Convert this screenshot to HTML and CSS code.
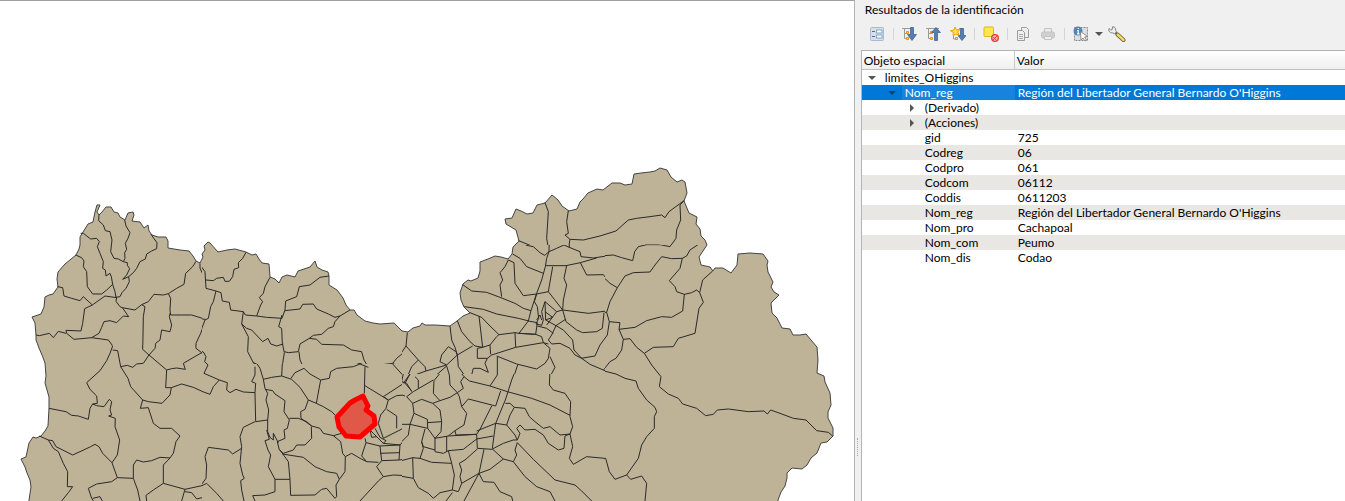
FILE: index.html
```html
<!DOCTYPE html>
<html lang="es">
<head>
<meta charset="utf-8">
<title>Resultados de la identificación</title>
<link rel="stylesheet" href="styles.css">
</head>
<body>
<div class="window">
<main class="canvas">
<svg class="map" viewBox="0 1 854 500" preserveAspectRatio="xMinYMin slice" role="img" aria-label="Mapa de distritos">
<defs>
<clipPath id="nw"><rect x="0" y="0" width="202" height="345"/></clipPath>
<clipPath id="sw"><rect x="0" y="345" width="202" height="160"/></clipPath>
<clipPath id="nc"><rect x="202" y="0" width="200" height="364"/></clipPath>
<clipPath id="sc"><rect x="202" y="364" width="200" height="140"/></clipPath>
<clipPath id="ne"><rect x="402" y="245" width="203" height="129"/></clipPath>
<clipPath id="se"><rect x="402" y="374" width="203" height="130"/></clipPath>
<clipPath id="top"><rect x="402" y="0" width="452" height="245"/></clipPath>
<clipPath id="east"><rect x="605" y="245" width="249" height="260"/></clipPath>
</defs>
<path class="region" d="M29 505L29 500 31 487 30 480 27 473 25 467 21 459 26 457 29 443 33 437 36 438 41 436 45 431 48 426 49 408 49 397 47 390 45 383 46 376 45 363 42 355 39 348 36 340 36 335 35 323 32 317 41 314 44 307 45 297 49 295 53 294 58 287 57 279 58 272 65 264 76 255 79 249 80 245 80 237 83 232 88 224 93 222 95 212 97 205 100 205 97 212 99 215 102 212 106 207 111 207 114 212 118 213 120 217 125 220 128 213 133 212 134 215 132 221 140 222 144 228 148 225 149 231 152 235 158 237 166 237 168 241 168 248 180 250 189 251 193 256 196 261 200 263 203 257 202 254 205 250 204 246 208 242 210 243 218 252 227 250 235 249 246 252 252 255 256 254 259 259 262 263 269 264 270 277 275 279 279 283 282 277 287 275 295 277 298 271 304 269 310 267 315 261 317 267 322 270 328 272 329 276 329 285 337 290 343 298 346 305 350 310 354 310 357 315 365 321 373 323 380 324 394 323 402 331 408 332 413 328 420 326 422 323 425 325 435 325 450 326 457 321 463 316 470 313 464 307 461 300 460 293 463 284 468 280 471 281 478 278 480 271 480 262 488 259 495 256 501 257 508 259 512 254 513 247 519 241 516 230 506 224 505 219 512 218 516 209 521 211 527 214 533 213 537 205 545 203 552 195 558 200 562 206 569 211 577 209 580 202 583 199 588 193 597 189 603 190 612 183 620 183 625 185 632 184 634 174 641 173 650 172 655 171 660 168 667 170 671 177 677 182 682 180 685 182 687 193 684 201 689 213 697 217 696 224 700 229 701 236 705 240 707 245 699 257 701 265 710 267 713 271 715 268 723 268 731 273 737 265 738 254 750 253 763 254 768 261 767 265 768 272 773 282 771 287 774 292 779 295 771 303 772 313 777 318 782 328 790 329 793 335 800 335 806 334 811 340 817 347 818 360 817 373 824 376 825 382 830 393 831 405 828 412 828 418 833 428 833 436 827 442 821 443 819 448 817 453 811 458 807 465 802 469 792 468 787 473 787 478 785 486 781 492 778 500 778 505Z"/>

<g clip-path="url(#nw)"><g class="limits" transform="translate(0 190) scale(.33333)">
<path d="M297 74L296 92 310 105 316 122 330 125 336 150 332 185 342 205 355 207 370 215 382 218 382 226 389 236 380 255 368 268 386 260 388 275 378 295 366 308 360 320 348 322 345 305 338 283 334 260 330 250 318 258 316 240 308 235 310 215 300 190 292 170 298 155 290 145 272 147 250 130 242 130"/>
<path d="M374 90L378 108 390 128 384 145 376 160 380 178 374 188 375 205 370 215"/>
<path d="M453 133L462 146 471 158 470 176 455 183 440 192 436 207 420 215 410 235 400 248 386 260"/>
<path d="M227 195L245 203 252 213 250 230 260 245 262 290 278 312 305 312 320 300 338 283"/>
<path d="M173 290L188 293 192 318 215 325 240 332 250 320 277 345 315 318 350 323 348 334 360 350 367 353 386 380 370 378 350 398 330 392 312 395 305 412 297 430 275 443 325 450 340 470 336 480"/>
<path d="M277 345L254 356 248 400 243 423 198 421 200 430 222 448 255 445 275 443M198 430L175 424 160 443 148 430 118 437 108 435"/>
<path d="M367 353L405 360 425 344 445 335 462 313 490 315 505 311 530 295 552 283 557 250 578 230 588 214M425 344L435 350 430 380 428 490"/>
<path d="M505 311L512 325 510 360 512 375 545 375 575 375 617 388 628 355 638 330 648 307 620 297 615 268 600 234 600 220"/>
<path d="M510 370L508 380 515 405 510 425 485 420 480 450 467 460 462 480M617 388L602 430 588 460 590 482"/>
</g></g>

<g clip-path="url(#sw)"><g class="limits" transform="translate(0 340) scale(.33333)">
<path d="M320 0L338 18 330 40 320 62 300 92 260 128 270 148 290 168 292 190 278 192 270 205 265 238 235 228 215 226 198 215 147 205M278 192L290 197 312 200 328 178 335 185 330 210 335 225 326 228 346 235 345 260 359 300 352 345 336 368"/>
<path d="M338 30L353 32 362 80 382 76 398 82 410 72 430 70 447 45 465 25 470 0M428 0L428 28 447 45 500 90 515 86 530 84 556 88 550 70 605 38"/>
<path d="M362 80L384 115 392 140 428 180 445 185 486 190 510 165 514 143 497 143 500 90M514 143L545 132 580 142 628 164 640 140 658 118 613 98 624 70 605 38 588 25 587 0"/>
<path d="M428 180L421 205 445 203 460 250 480 265 515 265 540 288 528 305 520 340 510 354 480 352 455 362 430 366 410 360 400 375 400 415 352 413 336 368"/>
<path d="M118 288L145 300 158 302 168 320 218 345 240 335 272 320 285 313 297 320 308 340 336 368M145 300L160 325 175 335 190 370 203 395 202 440 218 440 205 458 185 483"/>
<path d="M352 413L335 425 290 432 265 445 275 475 280 483M278 475L300 470 307 483M400 415L413 450 420 483M510 354L490 375 490 430 460 450 438 466 440 483M490 430L555 448 610 436 618 410 612 370 625 322 660 325M610 436L630 460 650 483M555 448L545 483M555 455L575 458 590 477 605 473 612 483"/>
</g></g>

<g clip-path="url(#nc)"><g class="limits" transform="translate(200 220) scale(.33333)">
<path d="M138 97L128 115 115 128 116 143 102 148 98 170 88 184 75 184 70 172 50 175 40 182 18 180M0 134L15 155 18 205 48 213 63 218 67 243 88 247 92 270 130 275 136 285 170 288 182 255 188 245 178 233 190 220 195 200 210 172"/>
<path d="M48 213L40 245 32 260 25 295 15 300 0 340M0 296L16 298M130 275L125 312 145 350 143 395 160 428 170 432 165 460 155 480M125 312L140 325 155 330 188 365 204 355 212 372 230 378 250 372"/>
<path d="M170 288L200 292 246 295 255 270 257 243 290 230 298 200 330 195 360 172 387 168M255 272L300 267 308 253 340 252 350 267 385 282 405 292 420 288 450 270M246 285L236 320 245 325 247 370 253 398 248 430 247 468M253 395L265 398 295 395 300 372 328 355 340 346 365 343 385 325 400 320 405 305 420 288"/>
<path d="M328 355L350 358 365 373 430 375 455 390 485 395 492 420 505 442 540 435 578 430 605 445 612 480M505 440L495 450 492 480M505 442L480 430 440 443 400 445 388 475 365 478 330 460 312 445 300 420 297 395M312 445L285 458 273 475 247 468 215 475 190 480 180 450 160 428"/>
<path d="M625 336L622 355 613 378 608 400 590 415 578 430M613 378L635 395 655 418M0 392L10 396 18 410 14 425 24 435 12 460 40 468 60 482"/>
</g></g>

<g clip-path="url(#sc)"><g class="limits" transform="translate(200 350) scale(.33333)">
<path d="M0 2L10 6 18 20 14 35 24 45 12 70 58 90 82 98 80 120 90 128 108 118 130 126 165 128 167 100 155 95 165 75 165 50M0 122L30 133 40 110 58 90M165 128L167 215 203 210 206 180 198 150 203 130 195 115 190 88 180 55 170 40"/>
<path d="M190 88L215 82 245 78 275 88 300 112 325 150 349 160 362 90M247 40L245 78M273 85L285 68 312 55 330 72 362 90 388 85 392 65 410 55 460 50 480 42 505 52M325 150L315 178 302 185 303 205 335 228 360 235 370 250 400 257 425 250"/>
<path d="M195 118L218 122 225 132 255 152 252 185 268 210 262 235 252 240 255 265 232 275 238 300 250 310 280 300 290 285 315 285 335 265 334 230M268 205L295 205 320 215 335 228M349 160L370 170 395 185 410 200"/>
<path d="M203 210L203 245 210 262 220 270 220 250 235 278M200 240L208 268 195 272 204 300 212 315 205 350 225 388 225 425 195 435 158 437 165 453M225 388L270 388 265 335 240 300"/>
<path d="M247 312L310 322 345 350 380 365 410 370 418 388 435 365 436 320 428 310 422 275 400 257"/>
<path d="M270 388L272 436 345 435 365 418 380 415 405 445 410 440 408 405 418 388M436 320L455 310 480 325 500 335 535 337"/>
<path d="M165 215L130 232 120 260 125 290 120 340 128 375 133 385 122 392 125 420 132 453M125 295L98 312 85 300 25 292 15 320 20 345 18 385 0 410 20 400 50 430 70 453"/>
<path d="M495 50L493 130M493 106L565 150 550 140 608 102 608 75 578 42M608 98L620 115 630 120 660 110M550 140M565 150L590 137 610 135 630 120M565 150L558 175 542 195 535 220 550 265 600 240 630 222 660 225M560 178L590 198 590 235M610 135L640 160 638 205 630 222"/>
<path d="M525 235L540 262 558 272 550 280 520 250 510 240M510 240L515 262 530 260 550 280 600 285 630 250 630 222M495 265L498 278 540 288 600 285 597 330 545 332 540 288M540 310L597 308M498 278L485 318 500 335M545 332L530 350 550 380 580 375 638 378 637 325 597 330M637 325L660 323M550 380L535 393 480 453"/>
</g></g>

<g clip-path="url(#ne)"><g class="limits" transform="translate(400 240) scale(.33333)">
<path d="M188 134L215 153 260 157 300 172 345 190 370 205 393 212M193 200L250 208 290 222 355 235 387 243M325 60L315 80 300 98 308 120 300 135 305 170M325 60L342 68 345 130 370 167 410 162 445 155"/>
<path d="M338 42L360 55 380 80 430 100M357 3L380 16 400 20 420 38 434 46 447 35 448 0M447 35L440 55 436 80 425 120 410 160 393 212 385 243 357 280M447 35L470 25 492 15 510 23 540 35 543 50 580 54 640 45 660 51M508 0L508 23M436 77L498 77 541 68 590 54M458 80L445 155 463 178 488 210M500 77L492 115 500 135 490 180 488 210M541 68L560 105 610 104 630 130 655 142M655 142L640 160 635 185 622 213M488 210L565 220 620 213 628 240 622 285 600 315 585 348 543 355"/>
<path d="M488 210L498 245 530 270 548 278 590 275 607 265 612 218M498 237L468 257 455 285 445 300 455 312 480 310 510 325 525 345 545 355 570 373 610 390 660 410M468 257L490 270 518 300 522 330 545 355M610 390L635 365 660 335M628 247L660 247"/>
<path d="M410 162L403 185 412 200 416 235 408 252 425 256 430 240 425 215 435 185 470 215 488 210M435 185L437 240 458 232 435 215M437 240L468 257M410 240L420 225 425 240M385 243L412 248 407 283 357 280M412 258L440 265 460 280M440 255L470 215"/>
<path d="M172 242L185 275 210 305 225 318 248 322 270 315 290 290 297 284 270 258 245 232 210 218M237 228L248 322M297 284L345 278 357 280M345 278L347 322 430 308 445 312M357 280L407 283 425 290 430 308M150 258L155 300 165 322 172 345 175 380 200 415 213 412 220 385 240 385 265 397 255 370 262 355 232 355 232 325 248 322M218 318L172 345M262 355L275 345 347 322M270 315L272 343"/>
<path d="M290 348L350 372 410 387 435 370 445 355 450 325 430 308M292 350L292 405 270 438M353 375L328 450M450 350L465 382 450 410 450 440 460 450"/>
<path d="M22 278L18 318 0 345M18 318L55 360 75 380 78 393 140 375 130 370 120 365 125 345 145 320 168 335 172 345 140 375M55 360L35 380 20 415 18 430 0 405M78 393L30 410 18 430M45 410L58 442 98 415 140 378 148 405 150 450M102 415L98 450M200 415L182 435 180 450M200 420L300 447"/>
</g></g>

<g clip-path="url(#se)"><g class="limits" transform="translate(400 360) scale(.33333)">
<path d="M140 15L102 62 100 100 120 122 98 130 65 118 38 130 20 110 40 95 100 60M140 15L148 45 150 75 172 98 190 85 182 65 192 50 172 25 170 0M172 98L150 112 120 122M30 42L15 70 35 92M45 50L55 60 55 85M0 25L10 40 5 65 20 70 35 95M30 42L10 70M0 103L15 108"/>
<path d="M192 50L208 63 270 78 322 95 395 115 450 135 510 166M292 0L292 45 270 78M353 15L335 60 316 120 287 190 277 265M302 93L287 138 205 117 185 140 178 110 172 98M185 140L200 160 192 195 165 212 168 225 230 223M275 138L240 208 230 223 232 265 277 268M230 213L287 190"/>
<path d="M316 130L330 130 343 142 330 165 320 195 287 190M343 142L375 145 388 170 405 185 430 205 450 200 480 225 510 222M320 195L345 225 352 240 340 240 310 250 277 267M352 240L360 220 350 205 360 195 375 210 405 208 430 225 445 250 475 270 492 265 495 228 510 222M352 248L345 270 350 285 340 305 310 297 277 267M352 248L400 298 465 360 525 375 545 393 575 423"/>
<path d="M340 305L375 350 410 380 450 395 465 423M310 297L270 328 237 340 185 370 180 350 185 330 178 310 195 300 232 267M252 268L237 340 192 423M237 340L250 365 282 367 300 395 335 410 338 423"/>
<path d="M450 30L448 75 460 90 495 100 512 125 510 170 518 200 510 222 518 260 508 295 520 313 560 290 615 295 625 325 645 357 660 355"/>
<path d="M38 130L42 160 82 178 83 205 105 235 123 215 125 185 120 150 98 130M82 188L125 185M42 160L30 193 83 205M0 193L30 193 25 225 0 250M75 207L65 245 70 265 60 295 38 293 0 303M65 245L70 260 105 270M105 235L145 228 165 212M105 235L105 275 130 280 145 272 190 268 230 237 280 228M140 228L140 275M38 293L40 355 0 348M60 295L95 307 155 310 145 272M155 310L163 345 157 390 120 398 100 415 85 400 55 383 40 355M157 390L175 395 185 370M157 398L138 423M145 228L230 223"/>
</g></g>

<g clip-path="url(#top)"><g class="limits" transform="translate(450 150) scale(.33333)">
<path d="M285 158L295 185 290 265 297 305 330 295 357 287 360 268 345 255 355 250 350 215 355 182M206 272L250 290 265 308 280 316 297 305M360 268L400 270 450 258 498 243 535 210 560 205 600 200 635 195 645 203 657 185 702 152 690 165 692 210 680 240 678 265 660 290 625 285 585 285"/>
</g></g>

<g clip-path="url(#east)"><g class="limits" transform="translate(600 240) scale(.33333)">
<path d="M0 48L40 45 65 53 98 62 104 35 115 20 140 14 180 14 210 20 221 0"/>
<path d="M0 102L30 130 52 143 75 108 100 98 150 96 165 75 185 50 215 56 247 55 240 85 208 122 225 140 230 155 253 163 275 158 290 150 299 158 308 120 338 93M253 163L248 213 215 232 185 230 140 242 105 262 57 268 70 298 90 296 110 322 133 340 160 322 220 320 235 295 285 280 297 205 310 187 299 158M28 245L60 248 57 268M70 298L65 330 48 355 30 365 10 390M0 217L20 217 28 245 22 285 0 315M52 143L30 185 20 217M247 55L260 48 270 30 300 10 320 8"/>
<path d="M133 340L155 375 183 410 178 440 205 462 235 475 248 492 290 505 317 527 340 523 352 510 385 507 445 515 492 513 502 522 512 510 540 520 580 535 618 540 650 572 685 577 698 588"/>
<path d="M0 390L48 402 75 415 108 423 115 445 140 480 165 502 170 515 163 530 163 565 140 590 125 615 115 655 80 705 92 718 125 708 140 730 135 783M0 655L17 655 28 695 45 718 80 705"/>
</g></g>
<path class="highlight" d="M363 396L366 402 368 406 366 410 374 416 375 424 368 430 360 437 346 436 339 427 337 417 350 403 355 400Z"/>
</svg>
</main>
<div class="splitter"><i class="grip"></i></div>
<aside class="panel">
<h1 class="title">Resultados de la identificación</h1>
<div class="toolbar" role="toolbar">
<button class="tool" aria-label="Ver formulario"><svg viewBox="0 0 16 16"><rect x="1.500" y="1.500" width="13" height="13" rx="1" fill="#d5e0ed" stroke="#a6bbd3"/><path d="M3 5.500h3M3 10.500h3" stroke="#536b86"/><rect x="7.500" y="4" width="5.500" height="3" fill="#fff" stroke="#88a6c7"/><rect x="7.500" y="9" width="5.500" height="3" fill="#fff" stroke="#88a6c7"/></svg></button>
<i class="sep"></i>
<button class="tool" aria-label="Expandir árbol"><svg viewBox="0 0 16 16"><path d="M0 2.500h10M2.500 2.500v10h3M2.500 7.500h3" fill="none" stroke="#999"/><path d="M4.500 5.500h2v2h-2zM4.500 11.500h2v2h-2z" fill="#ffd28c" stroke="#f28a1d"/><path d="M8.500 1.500h3v7h3L10 14.500 5.500 8.500h3z" fill="#537fb4" stroke="#315b8d" stroke-width=".7"/></svg></button>
<button class="tool" aria-label="Contraer árbol"><svg viewBox="0 0 16 16"><path d="M0 2.500h13M2.500 2.500v10h3M2.500 7.500h3" fill="none" stroke="#999"/><path d="M4.500 5.500h2v2h-2zM4.500 11.500h2v2h-2z" fill="#ffd28c" stroke="#f28a1d"/><path d="M8.500 14.500h3v-8h3L10 1.500 5.500 6.500h3z" fill="#537fb4" stroke="#315b8d" stroke-width=".7"/></svg></button>
<button class="tool" aria-label="Expandir resultados nuevos"><svg viewBox="0 0 16 16"><path d="M9 2.500h4M3.500 9v4h3" fill="none" stroke="#999"/><path d="M5.500 11.500h2v2h-2z" fill="#ffd28c" stroke="#f28a1d"/><path d="M10.500 2.500h3v7h2.500L12 14.500 8 9.500h2.500z" fill="#537fb4" stroke="#315b8d" stroke-width=".7"/><path d="M5 1l1.600 2.800 3.200-.4-2 2.600 1.400 3-3.200-1L3 9.700l.3-3.300L.5 4.700l3.300-.6z" fill="#ffe04a" stroke="#f5a000" stroke-width="1"/></svg></button>
<i class="sep"></i>
<button class="tool" aria-label="Limpiar resultados"><svg viewBox="0 0 16 16"><rect x="1" y="1" width="9.500" height="9.500" rx="1" fill="#fce94f" stroke="#d9b920"/><circle cx="12" cy="12" r="3.300" fill="#f5b9b9" stroke="#df3b3b" stroke-width="1.300"/><path d="M10 14l4-4M10.200 11l3 3" stroke="#df3b3b"/></svg></button>
<i class="sep"></i>
<button class="tool" aria-label="Copiar" disabled><svg viewBox="0 0 16 16" fill="#eee" stroke="#9c9c9c"><path d="M5.500 1.500h5l2 2v8h-7z"/><path d="M1.500 4.500h5l2 2v8h-7z"/><path d="M3 8.500h4M3 10.500h4M3 12.500h4" stroke="#aaa"/></svg></button>
<button class="tool" aria-label="Imprimir" disabled><svg viewBox="0 0 16 16" fill="#cfcfcf" stroke="#c4c4c4"><path d="M4.500 6V2.500h7V6" fill="#ececec"/><rect x="1.500" y="6" width="13" height="6" rx="1.500"/><path d="M4.500 10.500h7v3h-7z" fill="#eee"/></svg></button>
<i class="sep"></i>
<button class="tool" aria-label="Identificar objetos"><svg viewBox="0 0 16 16"><rect x="1.500" y="1.500" width="13" height="13" fill="#dedede" stroke="#888" stroke-dasharray="2 1"/><circle cx="5" cy="5" r="4.500" fill="#5084bd"/><path d="M5.300 2v1M4 4.500h1.200V8M4 7.800h2.500" fill="none" stroke="#fff" stroke-width="1.200"/><path d="M7.500 5.500l7 5-3 .5 2 3-1.500 1-2-3-2 2z" fill="#fff" stroke="#777" stroke-width=".8"/></svg></button>
<button class="drop" aria-label="Más modos"><svg viewBox="0 0 8 4"><path d="M0 0h8L4 4z" fill="#555"/></svg></button>
<button class="tool" aria-label="Configuración"><svg class="wrench" viewBox="0 0 18 16"><path d="M7.500 6.500l2 2" stroke="#777" stroke-width="2.500"/><path d="M9.500 8.500l6 5.500" stroke="#5f5936" stroke-width="4" stroke-linecap="round"/><path d="M9.700 8.700l5.800 5.300" stroke="#f3d86a" stroke-width="2.500" stroke-linecap="round"/><path d="M4.500.8l-.3 2.700L2.700 4 1 2.500C0 5 2 7.200 4.500 6.800l2 1 2-2-.8-1.500C8 2 6.500.5 4.500.8z" fill="#eee" stroke="#777" stroke-width=".9"/></svg></button>
</div>
<table class="tree">
<thead><tr><th>Objeto espacial</th><th>Valor</th></tr></thead>
<tbody>
<tr><td class="l1"><svg class="arrow" viewBox="0 0 8 8"><path d="M0 2h8L4 6z"/></svg>limites_OHiggins</td><td></td></tr>
<tr class="selected"><td class="l2"><svg class="arrow" viewBox="0 0 8 8"><path d="M0 2h8L4 6z"/></svg><span class="current">Nom_reg</span></td><td>Región del Libertador General Bernardo O'Higgins</td></tr>
<tr><td class="l3"><svg class="arrow" viewBox="0 0 8 8"><path d="M2 0v8l4-4z"/></svg>(Derivado)</td><td></td></tr>
<tr><td class="l3"><svg class="arrow" viewBox="0 0 8 8"><path d="M2 0v8l4-4z"/></svg>(Acciones)</td><td></td></tr>
<tr><td class="leaf">gid</td><td>725</td></tr>
<tr><td class="leaf">Codreg</td><td>06</td></tr>
<tr><td class="leaf">Codpro</td><td>061</td></tr>
<tr><td class="leaf">Codcom</td><td>06112</td></tr>
<tr><td class="leaf">Coddis</td><td>0611203</td></tr>
<tr><td class="leaf">Nom_reg</td><td>Región del Libertador General Bernardo O'Higgins</td></tr>
<tr><td class="leaf">Nom_pro</td><td>Cachapoal</td></tr>
<tr><td class="leaf">Nom_com</td><td>Peumo</td></tr>
<tr><td class="leaf">Nom_dis</td><td>Codao</td></tr>
</tbody>
</table>
<div class="blank"></div>
</aside>
</div>
</body>
</html>
```
FILE: styles.css
```css
* { box-sizing: border-box; }
body {
  margin: 0;
  background: #f0f0f0;
  color: #000;
  font: 12px/15px Lato, "Noto Sans", sans-serif;
}
.window { display: flex; height: 100vh; overflow: hidden; }
.canvas {
  flex: 1;
  min-width: 0;
  background: #fff;
  border-top: 1px solid #a0a0a0;
  border-right: 1px solid #b4b4b4;
  overflow: hidden;
}
.map { display: block; width: 100%; height: 100%; }
.region { fill: #beb297; stroke: #444; stroke-width: 1; stroke-linejoin: round; }
.limits path {
  fill: none;
  stroke: #2a2a2a;
  stroke-width: 1;
  stroke-linejoin: round;
  vector-effect: non-scaling-stroke;
}
.highlight { fill: #e05848; stroke: #f00; stroke-width: 5; stroke-linejoin: round; }
.splitter { width: 6px; display: flex; justify-content: center; align-items: flex-end; }
.grip { width: 1px; height: 18px; margin-bottom: 45px; border-left: 1px dotted #aaa; }
.panel { width: 36%; display: flex; flex-direction: column; min-width: 0; }
.title { margin: 0; padding: 2px 4px 0; font-size: 12px; line-height: 16px; font-weight: 400; }
.toolbar { display: flex; align-items: center; height: 32px; padding-left: 4px; }
button { border: 0; padding: 0; background: none; flex: none; }
.tool { width: 24px; height: 24px; display: grid; place-items: center; }
.tool svg { width: 16px; height: 16px; }
.tool .wrench { width: 18px; }
.drop { width: 12px; height: 24px; display: grid; place-items: center; }
.drop svg { width: 8px; height: 4px; }
.sep { width: 1px; height: 12px; margin: 0 4px; background: #d5d5d5; }
.tree {
  width: 100%;
  table-layout: fixed;
  border-collapse: separate;
  border-spacing: 0;
  border: 1px solid #b4b4b4;
  border-width: 1px 0 0 1px;
  background: #fff;
}
th {
  height: 19px;
  padding: 0 2px;
  text-align: left;
  font-weight: 400;
  background: linear-gradient(#fff, #efefef);
  border-right: 1px solid #c8c8c8;
  border-bottom: 1px solid #c0c0c0;
}
th:last-child { border-right: 0; }
th:first-child { width: 153px; }
td { height: 15px; padding: 0 0 0 3px; white-space: nowrap; overflow: hidden; line-height: 15px; }
tbody tr:nth-child(even) { background: #e9e7e3; }
tbody tr.selected { background: #0078d7; color: #fff; }
.current { display: inline-block; width: 100%; margin-left: -3px; padding-left: 3px; background: #1883dc; }
.arrow { width: 8px; height: 8px; margin-right: 9px; fill: #555; }
.selected .arrow { fill: #0b4470; }
.l1 { padding-left: 6px; }
.l2 { padding-left: 26px; }
.l3 { padding-left: 46px; }
.leaf { padding-left: 63px; }
.blank { flex: 1; background: #fff; border-left: 1px solid #b4b4b4; }
```
